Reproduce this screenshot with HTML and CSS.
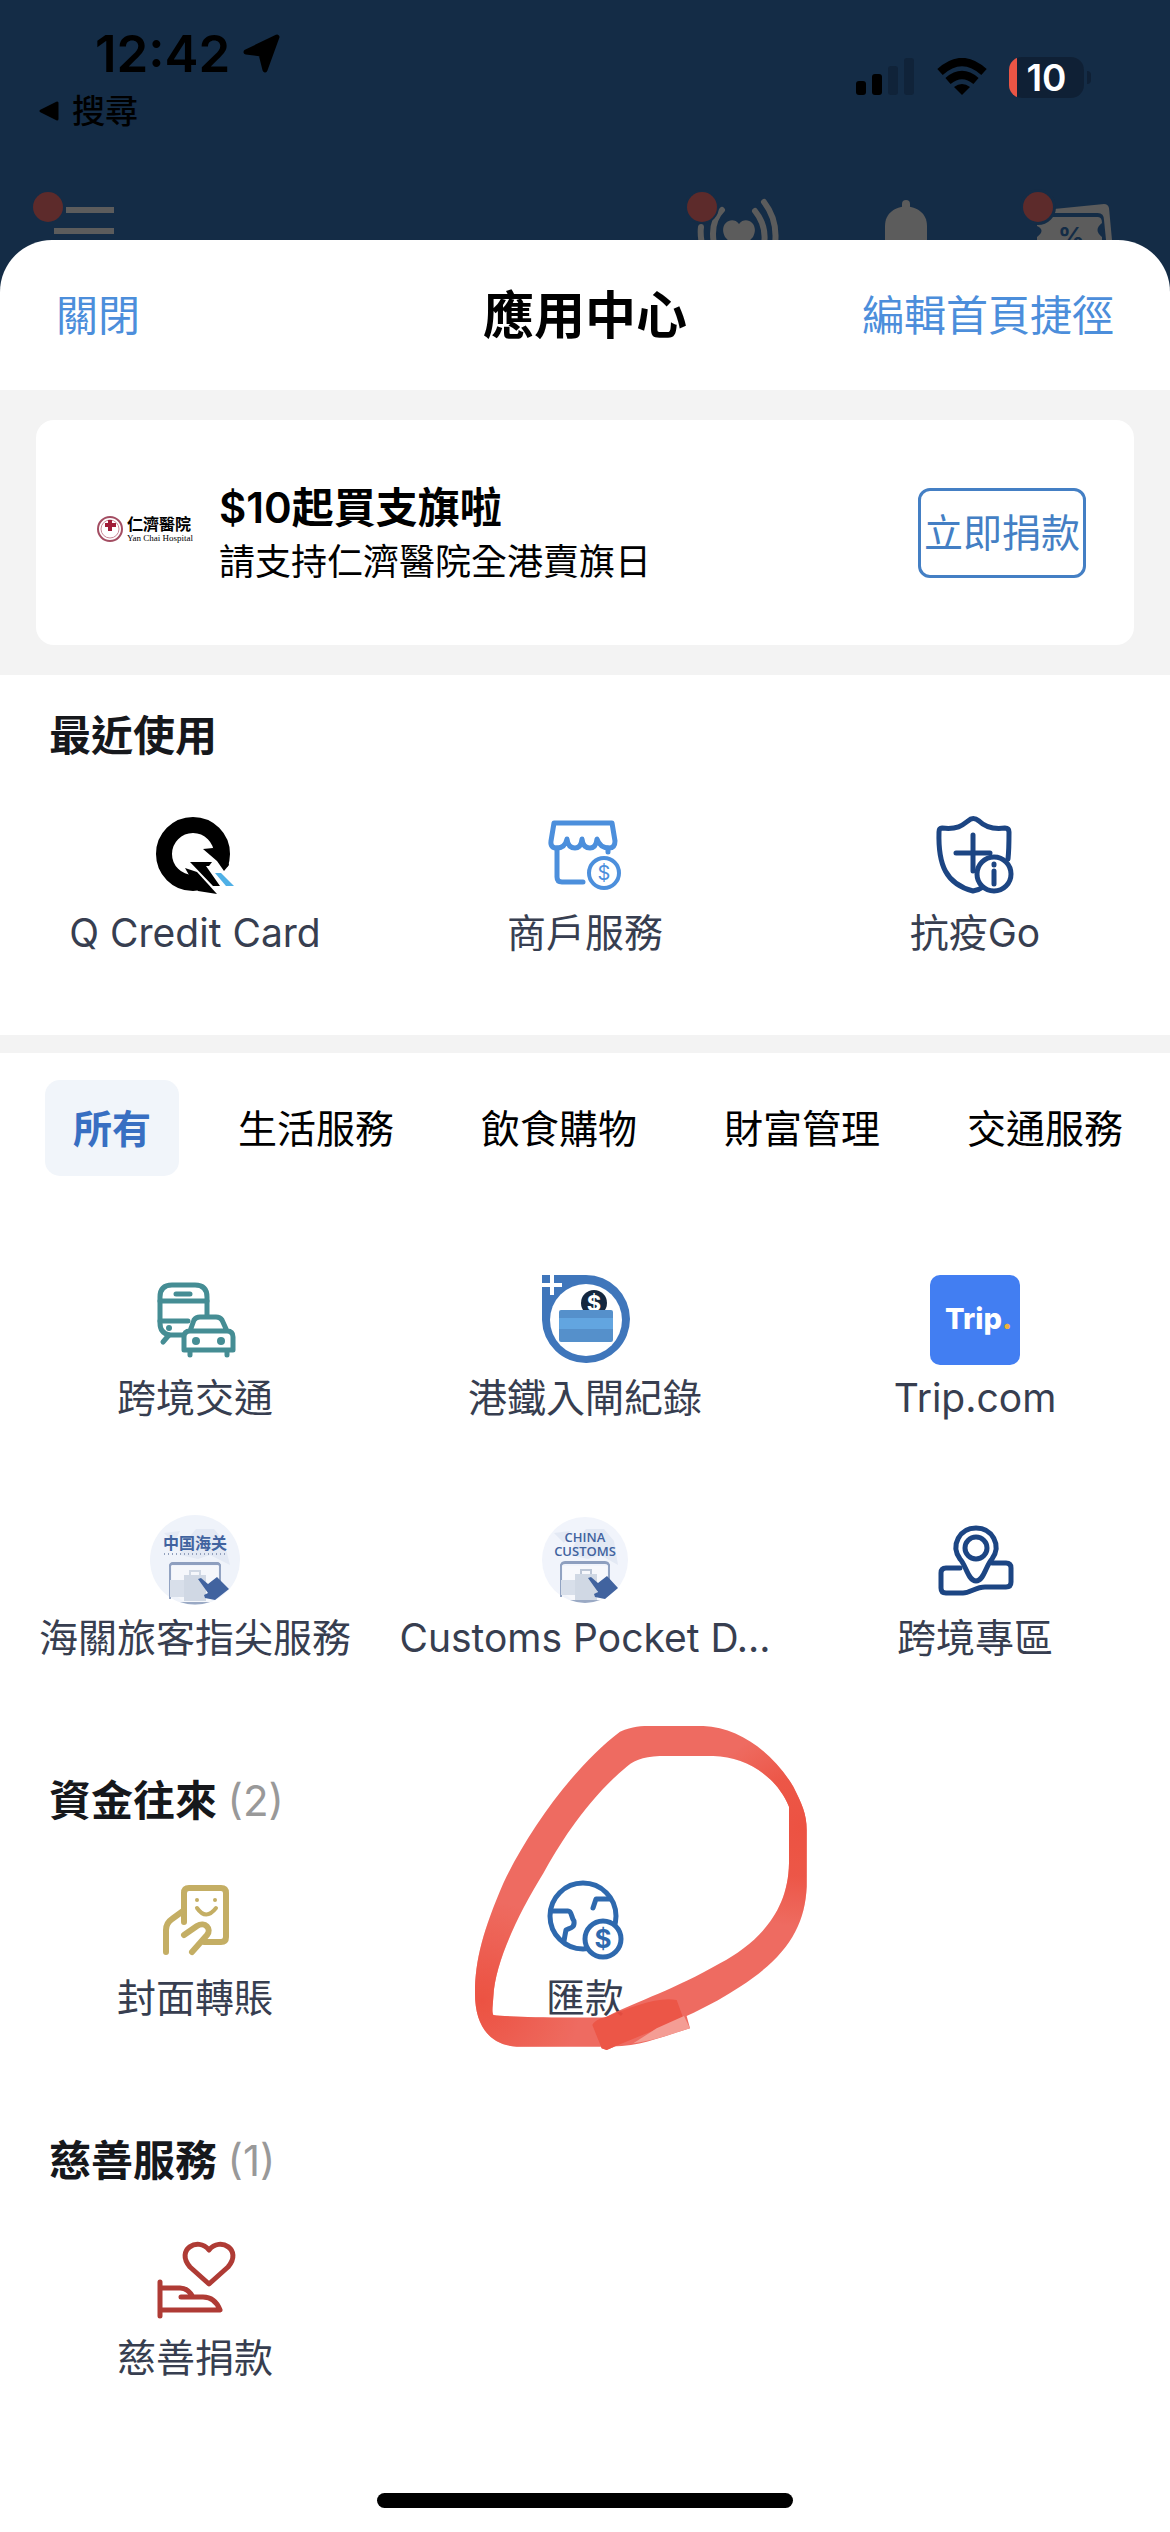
FILE: index.html
```html
<!DOCTYPE html>
<html lang="zh-HK">
<head>
    <meta charset="UTF-8">
    <meta name="viewport" content="width=device-width, initial-scale=1.0">
    <link rel="stylesheet" href="styles.css">
    <title>應用中心</title>
</head>
<body>
    <header class="status">
        <div class="status-left">
            <div class="time">
                <span>12:42</span>
                <svg width="40" height="40" viewBox="0 0 40 40"><path d="M35 3 L23 36 L19 20 L4 18 Z" stroke="#000" stroke-width="5" stroke-linejoin="round"/></svg>
            </div>
            <a href="#" class="back">
                <svg width="22" height="22" viewBox="0 0 22 22"><path d="M3 11L19 3V19Z" stroke="#000" stroke-width="3" stroke-linejoin="round"/></svg>
                搜尋
            </a>
        </div>
        <div class="status-right">
            <svg width="60" height="38" viewBox="0 0 60 38">
                <rect x="1" y="23" width="10" height="14" rx="3"/>
                <rect x="17" y="16" width="10" height="21" rx="3"/>
                <rect x="33" y="8" width="10" height="29" rx="3" fill="#102339"/>
                <rect x="49" y="0" width="10" height="37" rx="3" fill="#102339"/>
            </svg>
            <svg width="52" height="38" viewBox="0 0 52 38">
                <g fill="none" stroke="#000" stroke-width="8"><path d="M4 14Q26 -6 48 14"/><path d="M12 23Q26 11 40 23"/></g>
                <path d="M18 29Q26 23 34 29L26 37Z"/>
            </svg>
            <div class="battery"><span>10</span></div>
        </div>
    </header>
    <nav class="topbar">
        <svg width="90" height="60" viewBox="0 0 90 60">
            <path d="M36 30H84M24 51H84" stroke="#5c5c5c" stroke-width="6"/>
            <circle cx="18" cy="27" r="15" fill="#5d2b2b"/>
        </svg>
        <div class="topbar-icons">
            <svg width="100" height="60" viewBox="0 0 100 60">
                <g fill="none" stroke="#5c5c5c" stroke-width="6" stroke-linecap="round">
                    <path d="M17 47Q16 54 18 64M38 30Q26 42 30 64M71 31Q83 46 80 64M80 22Q94 40 91 64"/>
                </g>
                <path d="M55 44C62 35 76 44 69 57L55 72L41 57C34 44 48 35 55 44Z" fill="#5c5c5c"/>
                <circle cx="18" cy="27" r="17" fill="#142c46"/>
                <circle cx="18" cy="27" r="15" fill="#5d2b2b"/>
            </svg>
            <svg width="60" height="60" viewBox="0 0 60 60">
                <rect x="30" y="20" width="8" height="16" rx="4" fill="#5c5c5c"/>
                <path d="M13 60V46C13 20 55 20 55 46V60Z" fill="#5c5c5c"/>
            </svg>
            <svg width="100" height="60" viewBox="0 0 100 60">
                <path d="M34 29L84 24Q88 24 89 28L92 60H86L84 40Q84 32 76 33H34Z" fill="#5c5c5c"/>
                <path d="M17 37H78Q82 37 82 43Q73 50 82 57V60H17V57Q26 50 17 46Z" fill="#5c5c5c"/>
                <text x="38" y="66" class="percent">%</text>
                <circle cx="18" cy="27" r="18" fill="#142c46"/>
                <circle cx="18" cy="27" r="15" fill="#5d2b2b"/>
            </svg>
        </div>
    </nav>

    <main class="sheet">
        <div class="sheet-head">
            <button class="link">關閉</button>
            <h1>應用中心</h1>
            <button class="link right">編輯首頁捷徑</button>
        </div>

        <section class="banner">
            <div class="card">
                <svg class="hospital" width="102" height="42" viewBox="0 0 102 42">
                    <circle cx="14" cy="17" r="12" fill="#fff" stroke="#a34d62" stroke-width="2"/>
                    <circle cx="14" cy="17" r="9" fill="none" stroke="#c98a99" stroke-width="1"/>
                    <path d="M14 8V19M9 13H20" stroke="#a01c38" stroke-width="4"/>
                    <text x="31" y="18" class="hosp-zh">仁濟醫院</text>
                    <text x="31" y="29" class="hosp-en">Yan Chai Hospital</text>
                </svg>
                <div class="card-text">
                    <h2>$10起買支旗啦</h2>
                    <p>請支持仁濟醫院全港賣旗日</p>
                </div>
                <button class="donate">立即捐款</button>
            </div>
        </section>

        <section class="recent">
            <h2 class="title">最近使用</h2>
            <div class="grid">
                <a href="#" class="item">
                    <svg class="icon" viewBox="0 0 90 90">
                        <circle cx="43" cy="44" r="29" fill="none" stroke="#000" stroke-width="16"/>
                        <path d="M52 39L63 41L90 70L78 86L67 84L42 58L38 50L55 50Z" fill="#fff"/>
                        <path d="M74 61L79 55L76 44L63 38L53 39L67 51Z"/>
                        <path d="M40 52H62L59 56H56L70 76H63Z"/>
                        <path d="M35 58L47 62L67 84L48 81Z"/>
                        <path d="M65 63H71L84 76H76Z" fill="#4fb0e6"/>
                    </svg>
                    <span>Q Credit Card</span>
                </a>
                <a href="#" class="item">
                    <svg class="icon line shop" viewBox="0 0 90 90">
                        <path d="M14 13H72L75 31Q75 38 69 38Q60 38 57 29Q56 38 50 38Q43 38 42 29Q41 38 35 38Q28 38 27 29Q25 38 17 38Q10 38 11 31Z"/>
                        <path d="M17 38V67Q17 72 22 72H43M68 38V42"/>
                        <circle cx="64" cy="63" r="15" stroke-width="4"/>
                        <text x="64" y="70" class="coin">$</text>
                    </svg>
                    <span>商戶服務</span>
                </a>
                <a href="#" class="item">
                    <svg class="icon line navy" viewBox="0 0 90 90">
                        <path d="M78 49Q79 40 79 22Q79 18 75 18C60 20 53 15 49 11Q43 6 38 11C33 15 27 20 12 18Q9 18 9 22C8 55 16 74 43 81Q49 80 53 77"/>
                        <path d="M43 25V61M26 43H60"/>
                        <circle cx="64" cy="64" r="17" fill="#fff"/>
                        <path d="M64 61V74M64 54V55"/>
                    </svg>
                    <span>抗疫Go</span>
                </a>
            </div>
        </section>

        <nav class="tabs">
            <button class="active">所有</button>
            <button>生活服務</button>
            <button>飲食購物</button>
            <button>財富管理</button>
            <button>交通服務</button>
        </nav>

        <section class="group">
            <div class="grid">
                <a href="#" class="item">
                    <svg class="icon line teal" viewBox="0 0 90 90">
                        <path d="M33 60H19Q10 58 10 48V22Q10 10 22 10H45Q57 10 57 22V40"/>
                        <path d="M10 26H57M10 46H38M26 19H40M19 60L13 67"/>
                        <circle cx="19" cy="53" r="3" class="dot"/>
                        <path d="M34 62Q34 56 40 56L44 45Q46 42 50 42H66Q70 42 72 45L77 56Q83 56 83 62V75H34ZM40 56H77M40 76V80M77 76V80"/>
                        <circle cx="46" cy="66" r="4" class="dot"/>
                        <circle cx="71" cy="66" r="4" class="dot"/>
                    </svg>
                    <span>跨境交通</span>
                </a>
                <a href="#" class="item">
                    <svg class="icon" viewBox="0 0 90 90">
                        <path d="M2 0H46A44 44 0 1 1 2 45Z" fill="#3f76bb"/>
                        <circle cx="46" cy="45" r="36" fill="#fff"/>
                        <path d="M12 0V20M0 10H22" stroke="#fff" stroke-width="4"/>
                        <circle cx="54" cy="28" r="13" fill="#14273f"/>
                        <text x="54" y="36" class="coin white">$</text>
                        <rect x="19" y="35" width="54" height="32" rx="2" fill="#5590cb"/>
                        <rect x="19" y="43" width="54" height="11" fill="#62a5e0"/>
                    </svg>
                    <span>港鐵入閘紀錄</span>
                </a>
                <a href="#" class="item">
                    <svg class="icon" viewBox="0 0 90 90">
                        <rect width="90" height="90" rx="10" fill="#427ef2"/>
                        <text x="15" y="54" class="trip">Trip<tspan fill="#f0b13c">.</tspan></text>
                    </svg>
                    <span>Trip.com</span>
                </a>
                <a href="#" class="item">
                    <svg class="icon" viewBox="0 0 90 90">
                        <circle cx="45" cy="45" r="45" fill="#eff3fa"/>
                        <path d="M14 18L30 16L24 28ZM46 14H64L74 26L80 50L60 40L48 44L30 40L36 26Z" fill="#e3e9f4"/>
                        <path d="M20 84V51Q20 48 24 48H66Q70 48 70 51V66" fill="none" stroke="#92a3c2" stroke-width="2"/>
                        <path d="M19 52Q19 47 24 47H66Q71 47 71 52L68 50H22Z" fill="#8e9fbf"/>
                        <path d="M22 51H68V80L60 87H34L22 78Z" fill="#f5f7fb"/>
                        <path d="M20 65H34V82H20Z" fill="#d8dfea"/>
                        <rect x="34" y="60" width="22" height="26" fill="#d0d8e4"/>
                        <path d="M40 60V56H50V60" fill="none" stroke="#d0d8e4" stroke-width="2"/>
                        <path d="M30 87H60Q45 92 30 87Z" fill="#9aa9c4"/>
                        <path d="M48 64L51 63L58 69L67 62L79 74L65 85L55 83L54 80L58 78Z" fill="#41639f"/>
                        <text x="45" y="34" class="customs zh">中国海关</text>
                        <path d="M14 39H76" stroke="#92a0bc" stroke-width="2" stroke-dasharray="1 3"/>
                    </svg>
                    <span>海關旅客指尖服務</span>
                </a>
                <a href="#" class="item">
                    <svg class="icon" viewBox="0 0 90 90">
                        <circle cx="45" cy="45" r="43" fill="#f1f4fb"/>
                        <path d="M14 18L30 16L24 28ZM46 14H64L74 26L78 50L60 40L48 44L30 40L36 26Z" fill="#e3e9f4"/>
                        <path d="M21 82V51Q21 48 25 48H65Q69 48 69 51V66" fill="none" stroke="#92a3c2" stroke-width="2"/>
                        <path d="M20 52Q20 46 25 46H65Q70 46 70 52L67 49H23Z" fill="#8e9fbf"/>
                        <path d="M23 51H67V79L60 86H34L23 78Z" fill="#f7f8fc"/>
                        <path d="M21 65H35V80H21Z" fill="#d8dfea"/>
                        <rect x="35" y="59" width="22" height="26" fill="#d0d8e4"/>
                        <path d="M41 59V55H51V59" fill="none" stroke="#bcc6d6" stroke-width="2"/>
                        <path d="M30 85H60Q45 91 30 85Z" fill="#9aa9c4"/>
                        <path d="M48 63L51 62L58 68L67 61L78 73L65 84L55 82L54 79L58 77Z" fill="#41639f"/>
                        <text x="45" y="27" class="customs">CHINA</text>
                        <text x="45" y="41" class="customs">CUSTOMS</text>
                    </svg>
                    <span>Customs Pocket D...</span>
                </a>
                <a href="#" class="item">
                    <svg class="icon line navy" viewBox="0 0 90 90">
                        <path d="M30 53H16Q11 53 11 58V73Q11 78 16 78H33C40 78 46 72 55 72H76Q81 72 81 67V53Q81 48 76 48H62"/>
                        <path d="M46 66C38 66 36 50 30 44C20 30 30 13 46 13S72 30 62 44C56 50 54 66 46 66Z" fill="#fff"/>
                        <circle cx="46" cy="33" r="11"/>
                    </svg>
                    <span>跨境專區</span>
                </a>
            </div>
        </section>

        <section class="group">
            <h2 class="title">資金往來 <span class="count">(2)</span></h2>
            <div class="grid">
                <a href="#" class="item">
                    <svg class="icon line gold" viewBox="0 0 90 90">
                        <path d="M34 47V18Q34 13 39 13H71Q76 13 76 18V62Q76 67 71 67H54"/>
                        <path d="M16 77V55Q16 48 22 44L33 36M34 60L47 51C55 46 62 54 57 60L42 77"/>
                        <path d="M47 33Q56 46 66 33" stroke-width="4"/>
                        <circle cx="47" cy="25" r="2" class="dot"/>
                        <circle cx="65" cy="25" r="2" class="dot"/>
                    </svg>
                    <span>封面轉賬</span>
                </a>
                <a href="#" class="item">
                    <svg class="icon line blue" viewBox="0 0 90 90">
                        <circle cx="43" cy="41" r="33"/>
                        <path d="M12 36H28C32 36 31 42 34 46C35 53 30 53 26 55Q25 60 24 66M53 33L56 24H70"/>
                        <circle cx="63" cy="64" r="18" fill="#fff"/>
                        <text x="63" y="73" class="coin big">$</text>
                    </svg>
                    <span>匯款</span>
                    <!-- marker ring -->
                    <svg class="marker" viewBox="0 0 1200 1140">
                        <defs>
                            <radialGradient id="press-right" gradientUnits="userSpaceOnUse" cx="1080" cy="380" r="300">
                                <stop offset="0" stop-color="#ec4938"/>
                                <stop offset=".5" stop-color="#ec4938" stop-opacity=".8"/>
                                <stop offset="1" stop-color="#ec4938" stop-opacity="0"/>
                            </radialGradient>
                            <radialGradient id="press-left" gradientUnits="userSpaceOnUse" cx="125" cy="900" r="300">
                                <stop offset="0" stop-color="#ec4938"/>
                                <stop offset="1" stop-color="#ec4938" stop-opacity="0"/>
                            </radialGradient>
                            <path id="ring" d="M735 930L750 985C650 1015 600 1040 500 1040H230C150 1035 105 980 105 880C105 780 130 690 190 550C260 400 400 200 540 95C580 78 600 78 640 78H790C900 82 1000 160 1060 260C1085 310 1100 340 1100 390V560C1095 680 1040 770 900 860C780 940 650 985 500 1050L485 1045L457 975C465 960 480 955 500 950C600 900 700 870 840 790C950 730 1045 640 1047 490V320C1010 230 920 170 820 168H680C620 168 590 175 560 200C440 300 360 430 310 520C230 650 165 790 160 890C158 920 155 935 160 945C200 952 400 955 560 950Z"/>
                        </defs>
                        <use href="#ring" fill="#ee6459"/>
                        <use href="#ring" fill="url(#press-right)"/>
                        <use href="#ring" fill="url(#press-left)"/>
                        <path d="M457 975C465 960 480 955 500 950C580 920 650 890 710 900L730 955C660 985 580 1015 500 1050L485 1045Z" fill="#ec4d3e"/>
                        <path d="M732 948L750 985C700 1000 650 1020 580 1030L650 985Z" fill="#f4988f"/>
                    </svg>
                </a>
            </div>
        </section>

        <section class="group">
            <h2 class="title">慈善服務 <span class="count">(1)</span></h2>
            <div class="grid">
                <a href="#" class="item">
                    <svg class="icon line red" viewBox="0 0 90 90">
                        <path d="M59 49L40 32C25 15 48 1 59 15C70 1 93 15 78 32Z"/>
                        <path d="M10 47V81M10 53H30Q38 53 43 62M31 62H53Q65 62 70 75H10"/>
                    </svg>
                    <span>慈善捐款</span>
                </a>
            </div>
        </section>

        <div class="home"></div>
    </main>
</body>
</html>
```
FILE: styles.css
```css
*{
    margin: 0;
    padding: 0;
    box-sizing: border-box;
}
body{
    display: flex;
    flex-direction: column;
    min-height: 100vh;
    background-color: #142c46;
    font-family: Inter, "Noto Sans CJK TC", sans-serif;
    color: #000;
}
a{
    color: inherit;
    text-decoration: none;
}
button{
    border: none;
    background: none;
    font-family: inherit;
    cursor: pointer;
}

/* status bar */
.status{
    display: flex;
    justify-content: space-between;
    height: 180px;
    padding: 24px 86px 0 38px;
}
.time{
    display: flex;
    align-items: center;
    gap: 12px;
    padding-left: 57px;
    font-size: 51px;
    line-height: 60px;
    font-weight: 600;
}
.back{
    display: flex;
    align-items: center;
    gap: 12px;
    margin-top: 7px;
    font-size: 33px;
    line-height: 40px;
    font-weight: 500;
}
.status-right{
    display: flex;
    align-items: center;
    gap: 21px;
    height: 106px;
}
.battery{
    position: relative;
    width: 75px;
    height: 41px;
    border-radius: 13px;
    background: linear-gradient(to right, #ea5545 8px, #0f2035 8px);
    color: #fff;
    font-size: 37px;
    line-height: 41px;
    font-weight: 600;
    text-align: center;
}
.battery::after{
    content: "";
    position: absolute;
    right: -7px;
    top: 14px;
    width: 4px;
    height: 13px;
    border-radius: 0 4px 4px 0;
    background-color: #0f2035;
}

/* icons behind the sheet */
.topbar{
    display: flex;
    justify-content: space-between;
    padding: 0 50px 0 30px;
    height: 60px;
}
.topbar-icons{
    display: flex;
    gap: 88px;
}
.percent{
    font-size: 26px;
    font-weight: 700;
    fill: #142c46;
}

.sheet{
    flex: 1;
    display: flex;
    flex-direction: column;
    background-color: #fff;
    border-radius: 52px 52px 0 0;
}
.sheet-head{
    display: grid;
    grid-template-columns: 1fr auto 1fr;
    align-items: center;
    height: 150px;
    padding: 2px 56px 0;
}
.sheet-head h1{
    font-size: 51px;
    line-height: 60px;
    font-weight: 600;
}
.link{
    justify-self: start;
    font-size: 42px;
    line-height: 60px;
    color: #4c8edb;
}
.right{
    justify-self: end;
}

/* donation banner */
.banner{
    padding: 30px 36px;
    background-color: #f3f3f3;
}
.card{
    display: flex;
    align-items: center;
    height: 225px;
    padding: 0 48px 0 60px;
    border-radius: 18px;
    background-color: #fff;
}
.card-text{
    flex: 1;
    padding-left: 21px;
}
.card-text h2{
    font-size: 42px;
    line-height: 58px;
    font-weight: 600;
}
.card-text p{
    font-size: 36px;
    line-height: 50px;
}
.hosp-zh{
    font-family: "Noto Sans CJK TC", sans-serif;
    font-size: 16px;
    font-weight: 700;
}
.hosp-en{
    font-family: "Liberation Serif", serif;
    font-size: 9px;
}
.donate{
    width: 168px;
    height: 90px;
    border: 3px solid #447fc4;
    border-radius: 12px;
    font-size: 39px;
    line-height: 60px;
    white-space: nowrap;
    color: #447fc4;
}

/* service lists */
.recent{
    padding: 31px 0 69px;
    border-bottom: 18px solid #f3f3f3;
}
.title{
    padding-left: 49px;
    margin-bottom: 44px;
    font-size: 42px;
    line-height: 60px;
    font-weight: 600;
    color: #16181c;
}
.count{
    font-weight: 400;
    color: #999;
}
.grid{
    display: grid;
    grid-template-columns: repeat(3, 1fr);
    row-gap: 84px;
}
.item{
    position: relative;
    display: flex;
    flex-direction: column;
    align-items: center;
    font-size: 39px;
    line-height: 66px;
    color: #373e50;
    white-space: nowrap;
}
.tabs{
    display: flex;
    gap: 31px;
    padding: 27px 0 0 45px;
    margin-bottom: 99px;
    overflow: hidden;
}
.tabs button{
    flex: none;
    height: 96px;
    padding: 0 28px 4px;
    border-radius: 15px;
    font-size: 39px;
    color: #000;
}
.tabs .active{
    background-color: #f1f5fa;
    color: #386fc2;
    font-weight: 600;
}
.group{
    margin-bottom: 100px;
}

.icon{
    width: 90px;
    height: 90px;
}
.line{
    fill: none;
    stroke: currentColor;
    stroke-width: 5;
    stroke-linecap: round;
    stroke-linejoin: round;
}
.dot{
    fill: currentColor;
    stroke: none;
}
.shop{
    color: #4c8fdc;
}
.navy{
    color: #1c4583;
}
.teal{
    color: #458d94;
}
.gold{
    color: #c4ae64;
    stroke-width: 6;
}
.blue{
    color: #2e69ae;
}
.red{
    color: #af3b35;
}
.coin{
    font-size: 20px;
    text-anchor: middle;
    fill: currentColor;
    stroke: none;
}
.white{
    font-size: 22px;
    font-weight: 700;
    fill: #fff;
}
.big{
    font-size: 26px;
    font-weight: 700;
}
.trip{
    font-size: 29px;
    font-weight: 800;
    fill: #fff;
}
.customs{
    font-family: "Open Sans", sans-serif;
    font-size: 13px;
    font-weight: 600;
    text-anchor: middle;
    fill: #41639f;
}
.zh{
    font-family: "Noto Sans CJK SC", sans-serif;
    font-size: 16px;
    font-weight: 700;
}
.marker{
    position: absolute;
    top: -175px;
    left: 50px;
    width: 400px;
    height: 380px;
    opacity: .95;
}

.home{
    width: 416px;
    height: 15px;
    margin: auto auto 24px;
    border-radius: 8px;
    background-color: #000;
}
```
